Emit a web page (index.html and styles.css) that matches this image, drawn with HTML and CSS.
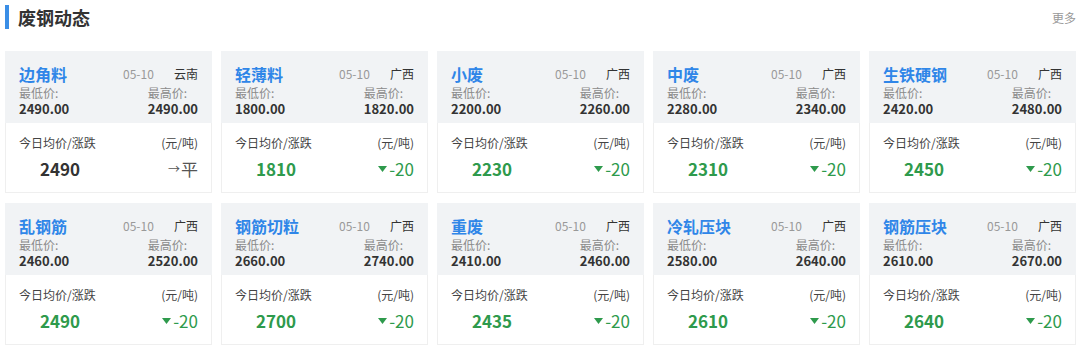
FILE: index.html
```html
<!DOCTYPE html>
<html lang="zh-CN">
<head>
<meta charset="utf-8">
<title>废钢动态</title>
<link rel="stylesheet" href="styles.css">
</head>
<body>
<div class="panel">
  <div class="panel-head">
    <h2 class="panel-title">废钢动态</h2>
    <a class="more">更多</a>
  </div>
  <div class="grid">
    <div class="card">
      <div class="card-top">
        <div class="row"><span class="name">边角料</span><span class="date">05-10</span><span class="region">云南</span></div>
        <div class="row"><div class="col"><div class="lbl">最低价:</div><div class="val">2490.00</div></div><div class="col col-r"><div class="lbl">最高价:</div><div class="val">2490.00</div></div></div>
      </div>
      <div class="card-bot">
        <div class="row"><span class="bl">今日均价/涨跌</span><span class="unit">(元/吨)</span></div>
        <div class="row"><span class="avg">2490</span><span class="chg flat"><span class="arr">→</span>平</span></div>
      </div>
    </div>
    <div class="card">
      <div class="card-top">
        <div class="row"><span class="name">轻薄料</span><span class="date">05-10</span><span class="region">广西</span></div>
        <div class="row"><div class="col"><div class="lbl">最低价:</div><div class="val">1800.00</div></div><div class="col col-r"><div class="lbl">最高价:</div><div class="val">1820.00</div></div></div>
      </div>
      <div class="card-bot">
        <div class="row"><span class="bl">今日均价/涨跌</span><span class="unit">(元/吨)</span></div>
        <div class="row"><span class="avg down">1810</span><span class="chg down"><svg class="tri" width="9" height="6" viewBox="0 0 9 6"><path d="M0 0H9L4.5 6Z" fill="currentColor"/></svg>-20</span></div>
      </div>
    </div>
    <div class="card">
      <div class="card-top">
        <div class="row"><span class="name">小废</span><span class="date">05-10</span><span class="region">广西</span></div>
        <div class="row"><div class="col"><div class="lbl">最低价:</div><div class="val">2200.00</div></div><div class="col col-r"><div class="lbl">最高价:</div><div class="val">2260.00</div></div></div>
      </div>
      <div class="card-bot">
        <div class="row"><span class="bl">今日均价/涨跌</span><span class="unit">(元/吨)</span></div>
        <div class="row"><span class="avg down">2230</span><span class="chg down"><svg class="tri" width="9" height="6" viewBox="0 0 9 6"><path d="M0 0H9L4.5 6Z" fill="currentColor"/></svg>-20</span></div>
      </div>
    </div>
    <div class="card">
      <div class="card-top">
        <div class="row"><span class="name">中废</span><span class="date">05-10</span><span class="region">广西</span></div>
        <div class="row"><div class="col"><div class="lbl">最低价:</div><div class="val">2280.00</div></div><div class="col col-r"><div class="lbl">最高价:</div><div class="val">2340.00</div></div></div>
      </div>
      <div class="card-bot">
        <div class="row"><span class="bl">今日均价/涨跌</span><span class="unit">(元/吨)</span></div>
        <div class="row"><span class="avg down">2310</span><span class="chg down"><svg class="tri" width="9" height="6" viewBox="0 0 9 6"><path d="M0 0H9L4.5 6Z" fill="currentColor"/></svg>-20</span></div>
      </div>
    </div>
    <div class="card">
      <div class="card-top">
        <div class="row"><span class="name">生铁硬钢</span><span class="date">05-10</span><span class="region">广西</span></div>
        <div class="row"><div class="col"><div class="lbl">最低价:</div><div class="val">2420.00</div></div><div class="col col-r"><div class="lbl">最高价:</div><div class="val">2480.00</div></div></div>
      </div>
      <div class="card-bot">
        <div class="row"><span class="bl">今日均价/涨跌</span><span class="unit">(元/吨)</span></div>
        <div class="row"><span class="avg down">2450</span><span class="chg down"><svg class="tri" width="9" height="6" viewBox="0 0 9 6"><path d="M0 0H9L4.5 6Z" fill="currentColor"/></svg>-20</span></div>
      </div>
    </div>
    <div class="card">
      <div class="card-top">
        <div class="row"><span class="name">乱钢筋</span><span class="date">05-10</span><span class="region">广西</span></div>
        <div class="row"><div class="col"><div class="lbl">最低价:</div><div class="val">2460.00</div></div><div class="col col-r"><div class="lbl">最高价:</div><div class="val">2520.00</div></div></div>
      </div>
      <div class="card-bot">
        <div class="row"><span class="bl">今日均价/涨跌</span><span class="unit">(元/吨)</span></div>
        <div class="row"><span class="avg down">2490</span><span class="chg down"><svg class="tri" width="9" height="6" viewBox="0 0 9 6"><path d="M0 0H9L4.5 6Z" fill="currentColor"/></svg>-20</span></div>
      </div>
    </div>
    <div class="card">
      <div class="card-top">
        <div class="row"><span class="name">钢筋切粒</span><span class="date">05-10</span><span class="region">广西</span></div>
        <div class="row"><div class="col"><div class="lbl">最低价:</div><div class="val">2660.00</div></div><div class="col col-r"><div class="lbl">最高价:</div><div class="val">2740.00</div></div></div>
      </div>
      <div class="card-bot">
        <div class="row"><span class="bl">今日均价/涨跌</span><span class="unit">(元/吨)</span></div>
        <div class="row"><span class="avg down">2700</span><span class="chg down"><svg class="tri" width="9" height="6" viewBox="0 0 9 6"><path d="M0 0H9L4.5 6Z" fill="currentColor"/></svg>-20</span></div>
      </div>
    </div>
    <div class="card">
      <div class="card-top">
        <div class="row"><span class="name">重废</span><span class="date">05-10</span><span class="region">广西</span></div>
        <div class="row"><div class="col"><div class="lbl">最低价:</div><div class="val">2410.00</div></div><div class="col col-r"><div class="lbl">最高价:</div><div class="val">2460.00</div></div></div>
      </div>
      <div class="card-bot">
        <div class="row"><span class="bl">今日均价/涨跌</span><span class="unit">(元/吨)</span></div>
        <div class="row"><span class="avg down">2435</span><span class="chg down"><svg class="tri" width="9" height="6" viewBox="0 0 9 6"><path d="M0 0H9L4.5 6Z" fill="currentColor"/></svg>-20</span></div>
      </div>
    </div>
    <div class="card">
      <div class="card-top">
        <div class="row"><span class="name">冷轧压块</span><span class="date">05-10</span><span class="region">广西</span></div>
        <div class="row"><div class="col"><div class="lbl">最低价:</div><div class="val">2580.00</div></div><div class="col col-r"><div class="lbl">最高价:</div><div class="val">2640.00</div></div></div>
      </div>
      <div class="card-bot">
        <div class="row"><span class="bl">今日均价/涨跌</span><span class="unit">(元/吨)</span></div>
        <div class="row"><span class="avg down">2610</span><span class="chg down"><svg class="tri" width="9" height="6" viewBox="0 0 9 6"><path d="M0 0H9L4.5 6Z" fill="currentColor"/></svg>-20</span></div>
      </div>
    </div>
    <div class="card">
      <div class="card-top">
        <div class="row"><span class="name">钢筋压块</span><span class="date">05-10</span><span class="region">广西</span></div>
        <div class="row"><div class="col"><div class="lbl">最低价:</div><div class="val">2610.00</div></div><div class="col col-r"><div class="lbl">最高价:</div><div class="val">2670.00</div></div></div>
      </div>
      <div class="card-bot">
        <div class="row"><span class="bl">今日均价/涨跌</span><span class="unit">(元/吨)</span></div>
        <div class="row"><span class="avg down">2640</span><span class="chg down"><svg class="tri" width="9" height="6" viewBox="0 0 9 6"><path d="M0 0H9L4.5 6Z" fill="currentColor"/></svg>-20</span></div>
      </div>
    </div>
  </div>
</div>
</body>
</html>
```

FILE: styles.css
```css
* { box-sizing: border-box; }
html, body { margin: 0; padding: 0; background: #fff; }
body {
  font-family: "Noto Sans CJK SC", "Noto Sans", sans-serif;
  color: #333;
  font-size: 12px;
}
.panel { padding: 0 4px 0 5px; }
.panel-head {
  height: 51px;
  display: flex;
  align-items: flex-start;
  justify-content: space-between;
  padding-top: 5px;
}
.panel-title {
  margin: 0;
  font-size: 18px;
  font-weight: bold;
  line-height: 24px;
  color: #333;
  border-left: 4px solid #3a8ee6;
  padding-left: 9px;
}
.more {
  font-size: 12px;
  color: #999;
  line-height: 16px;
  margin-top: 5px;
}
.grid {
  display: grid;
  grid-template-columns: repeat(5, 1fr);
  gap: 10px 9px;
}
.card {
  border: 1px solid #efefef;
  background: #fff;
}
.card-top {
  background: #f1f3f5;
  margin: -1px -1px 0 -1px;
  padding: 12px 14px 6px 14px;
  height: 72px;
}
.row { display: flex; align-items: center; }
.name {
  font-size: 16px;
  font-weight: bold;
  color: #2f86e8;
  line-height: 22px;
  flex: 1;
}
.date {
  color: #999;
  font-size: 12px;
  line-height: 22px;
  width: 51px;
}
.region {
  color: #333;
  font-size: 12px;
  line-height: 22px;
}
.col-r { margin-left: auto; }
.lbl { color: #8a8a8a; font-size: 12px; line-height: 16px; }
.val { color: #333; font-size: 13px; font-weight: bold; line-height: 16px; }
.card-bot {
  padding: 10px 13px 9px 13px;
  height: 69px;
}
.bl, .unit { font-size: 12px; line-height: 20px; color: #444; }
.unit { margin-left: auto; }
.card-bot .row + .row { margin-top: 2px; }
.avg {
  width: 82px;
  text-align: center;
  font-size: 17px;
  font-weight: bold;
  line-height: 28px;
  color: #333;
}
.avg.down { color: #2e9a4c; }
.chg {
  margin-left: auto;
  font-size: 17px;
  line-height: 28px;
  display: flex;
  align-items: center;
}
.chg.down { color: #2e9a4c; }
.chg.flat { color: #555; }
.arr { font-size: 12px; margin-right: 1px; }
.tri { margin-right: 2px; }
```
